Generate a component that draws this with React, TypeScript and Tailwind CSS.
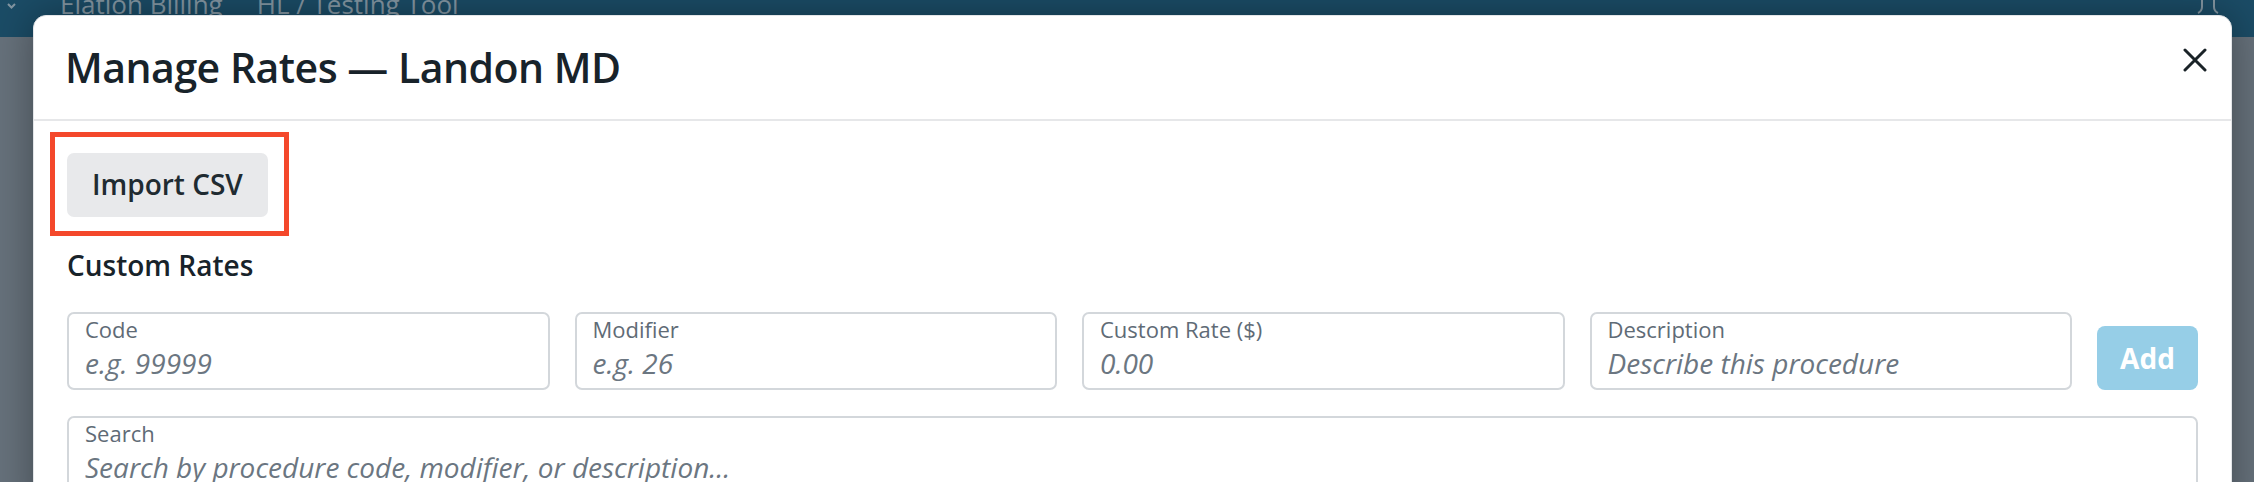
import type { ReactNode } from "react";

type FieldProps = {
  label: string;
  placeholder: string;
  className?: string;
};

function Field({ label, placeholder, className }: FieldProps) {
  return (
    <label
      className={`flex flex-col rounded-[7px] border-2 border-[#d3d7db] bg-white px-[16px] pt-[2px] pb-[7px] ${className ?? ""}`}
    >
      <span className="text-[22px] leading-[26px] text-[#5f6b76]">{label}</span>
      <input
        placeholder={placeholder}
        className="mt-[3px] h-[36px] w-full bg-transparent text-[28px] leading-[36px] text-[#1f2b31] outline-none placeholder:italic placeholder:text-[#6b7681]"
      />
    </label>
  );
}

function Annotated({ children }: { children: ReactNode }) {
  return (
    <div className="relative inline-flex">
      {children}
      <span className="pointer-events-none absolute -top-[21px] -right-[21px] -bottom-[19px] -left-[17px] border-[5px] border-[#f4482b]" />
    </div>
  );
}

export default function App() {
  return (
    <div className="relative h-[482px] w-[2254px] overflow-hidden bg-[#66717b] font-['Open_Sans',sans-serif]">
      {/* page behind the dialog */}
      <div className="flex h-[37px] items-start bg-[#1b4c66] text-[#8396a2]">
        <svg width="9" height="6" viewBox="0 0 9 6" className="mt-[3px] ml-[7px]">
          <path d="M1 1l3.5 3.5L8 1" fill="none" stroke="currentColor" strokeWidth="2" />
        </svg>
        <span className="-mt-[13px] ml-[44px] text-[26px] leading-[34px]">Elation Billing</span>
        <span className="-mt-[13px] ml-[34px] text-[26px] leading-[34px]">HL / Testing Tool</span>
        <svg width="22" height="14" viewBox="0 0 22 14" className="mr-[35px] ml-auto">
          <path d="M5 0v7c0 3-2 5-4 6M17 0v7c0 3 2 5 4 6" fill="none" stroke="currentColor" strokeWidth="2" />
        </svg>
      </div>

      {/* dialog */}
      <div className="absolute top-[15px] left-[33px] w-[2199px] rounded-t-[13px] border border-[#e3e5e8] bg-white shadow-[0_0_40px_rgba(0,0,0,0.35)]">
        <div className="flex items-start justify-between border-b-2 border-[#e6e7e9] pt-[23px] pr-[24px] pb-[24px] pl-[31px]">
          <h2 className="text-[41px] leading-[56px] font-semibold tracking-[-0.5px] text-[#18232a]">
            Manage Rates — Landon MD
          </h2>
          <button className="mt-[9px] text-[#1a2328]">
            <svg width="24" height="24" viewBox="0 0 24 24">
              <path d="M2 2l20 20M22 2L2 22" fill="none" stroke="currentColor" strokeWidth="3" strokeLinecap="round" />
            </svg>
          </button>
        </div>

        <div className="px-[33px] pt-[32px]">
          <Annotated>
            <button className="rounded-[7px] bg-[#e8e9eb] px-[25px] pt-[12px] pb-[14px] text-[28px] leading-[38px] font-semibold text-[#1f2b31]">
              Import CSV
            </button>
          </Annotated>

          <h3 className="mt-[29px] text-[28px] leading-[38px] font-semibold text-[#18232a]">
            Custom Rates
          </h3>

          <div className="mt-[28px] flex items-end gap-[25px]">
            <Field label="Code" placeholder="e.g. 99999" className="flex-1" />
            <Field label="Modifier" placeholder="e.g. 26" className="flex-1" />
            <Field label="Custom Rate ($)" placeholder="0.00" className="flex-1" />
            <Field label="Description" placeholder="Describe this procedure" className="flex-1" />
            <button className="flex h-[64px] w-[101px] items-center justify-center rounded-[8px] bg-[#96cee7] text-[28px] font-bold text-white">
              Add
            </button>
          </div>

          <Field
            label="Search"
            placeholder="Search by procedure code, modifier, or description..."
            className="mt-[26px] pb-[30px]"
          />
        </div>
      </div>
    </div>
  );
}
